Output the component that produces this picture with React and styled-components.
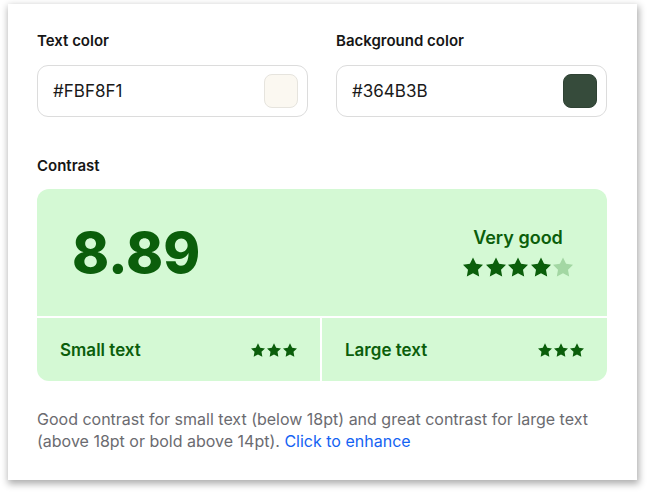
import React from "react";
import styled, { createGlobalStyle } from "styled-components";

const Global = createGlobalStyle`
  html, body { margin: 0; padding: 0; background: #ffffff; }
  body { font-family: Inter, "Noto Sans", sans-serif; -webkit-font-smoothing: antialiased; }
  * { box-sizing: border-box; }
`;

const Page = styled.div`
  padding: 4px 0 0 8px;
  width: 647px;
  height: 494px;
`;

const Card = styled.div`
  width: 629px;
  height: 476px;
  background: #ffffff;
  box-shadow: 1px 3px 7px 1px rgba(0, 0, 0, 0.32);
  padding: 27px 29px 0 29px;
  display: flex;
  flex-direction: column;
`;

const Fields = styled.div`
  display: grid;
  grid-template-columns: 271px 271px;
  column-gap: 28px;
`;

const Field = styled.div`
  display: flex;
  flex-direction: column;
  gap: 14px;
`;

const Label = styled.div`
  font-size: 15px;
  font-weight: 600;
  line-height: 20px;
  color: #161616;
`;

const InputBox = styled.div`
  height: 52px;
  border: 1px solid #dcdcdc;
  border-radius: 11px;
  display: flex;
  align-items: center;
  justify-content: space-between;
  padding: 0 9px 0 15px;
`;

const HexText = styled.span`
  font-size: 17px;
  color: #1a1a1a;
  font-weight: 400;
`;

const Swatch = styled.div`
  width: 34px;
  height: 34px;
  border-radius: 8px;
  background: ${(p) => p.$color};
  border: 1px solid ${(p) => p.$border};
`;

const Section = styled.div`
  margin-top: 39px;
  display: flex;
  flex-direction: column;
  gap: 13px;
`;

const Panel = styled.div`
  width: 570px;
  border-radius: 12px;
  overflow: hidden;
  display: grid;
  grid-template-columns: 283px 285px;
  grid-template-rows: 127px 63px;
  gap: 2px;
  background: #ffffff;
`;

const Score = styled.div`
  grid-column: 1 / span 2;
  background: #d4f9d4;
  display: flex;
  align-items: center;
  justify-content: space-between;
  padding: 0 34px 0 35px;
`;

const Ratio = styled.div`
  font-size: 56px;
  font-weight: 800;
  color: #0b5e0b;
  line-height: 1;
  padding-top: 1px;
`;

const Verdict = styled.div`
  display: flex;
  flex-direction: column;
  align-items: center;
  gap: 8px;
  padding-bottom: 1px;
`;

const VerdictText = styled.div`
  font-size: 18px;
  font-weight: 600;
  color: #0b5e0b;
  line-height: 22px;
`;

const Stars = styled.div`
  display: flex;
  gap: ${(p) => p.$gap}px;
`;

const Cell = styled.div`
  background: #d4f9d4;
  display: flex;
  align-items: center;
  justify-content: space-between;
  padding: 0 23px;
`;

const CellText = styled.div`
  font-size: 17px;
  font-weight: 600;
  color: #0b5e0b;
`;

const Note = styled.p`
  margin: 27px 0 0 0;
  font-size: 16px;
  line-height: 22px;
  color: #6b6b70;
  width: 571px;
`;

const Link = styled.a`
  color: #1463f3;
  text-decoration: none;
  cursor: pointer;
`;

const Star = ({ size, color }) => (
  <svg width={size} height={size} viewBox="2 1.5 20 20" fill={color}>
    <path d="M12 2l3.09 6.26L22 9.27l-5 4.87 1.18 6.88L12 17.77l-6.18 3.25L7 14.14 2 9.27l6.91-1.01L12 2z" />
  </svg>
);

const StarRow = ({ count, filled, size, gap }) => (
  <Stars $gap={gap}>
    {Array.from({ length: count }).map((_, i) => (
      <Star key={i} size={size} color={i < filled ? "#0b5e0b" : "#a3d7a3"} />
    ))}
  </Stars>
);

export default function App() {
  return (
    <>
      <Global />
      <Page>
        <Card>
          <Fields>
            <Field>
              <Label>Text color</Label>
              <InputBox>
                <HexText>#FBF8F1</HexText>
                <Swatch $color="#FBF8F1" $border="#e6e4de" />
              </InputBox>
            </Field>
            <Field>
              <Label>Background color</Label>
              <InputBox>
                <HexText>#364B3B</HexText>
                <Swatch $color="#364B3B" $border="#2f4234" />
              </InputBox>
            </Field>
          </Fields>
          <Section>
            <Label>Contrast</Label>
            <Panel>
              <Score>
                <Ratio>8.89</Ratio>
                <Verdict>
                  <VerdictText>Very good</VerdictText>
                  <StarRow count={5} filled={4} size={20} gap={2.5} />
                </Verdict>
              </Score>
              <Cell>
                <CellText>Small text</CellText>
                <StarRow count={3} filled={3} size={14} gap={2} />
              </Cell>
              <Cell>
                <CellText>Large text</CellText>
                <StarRow count={3} filled={3} size={14} gap={2} />
              </Cell>
            </Panel>
          </Section>
          <Note>
            Good contrast for small text (below 18pt) and great contrast for large text
            (above 18pt or bold above 14pt). <Link>Click to enhance</Link>
          </Note>
        </Card>
      </Page>
    </>
  );
}
